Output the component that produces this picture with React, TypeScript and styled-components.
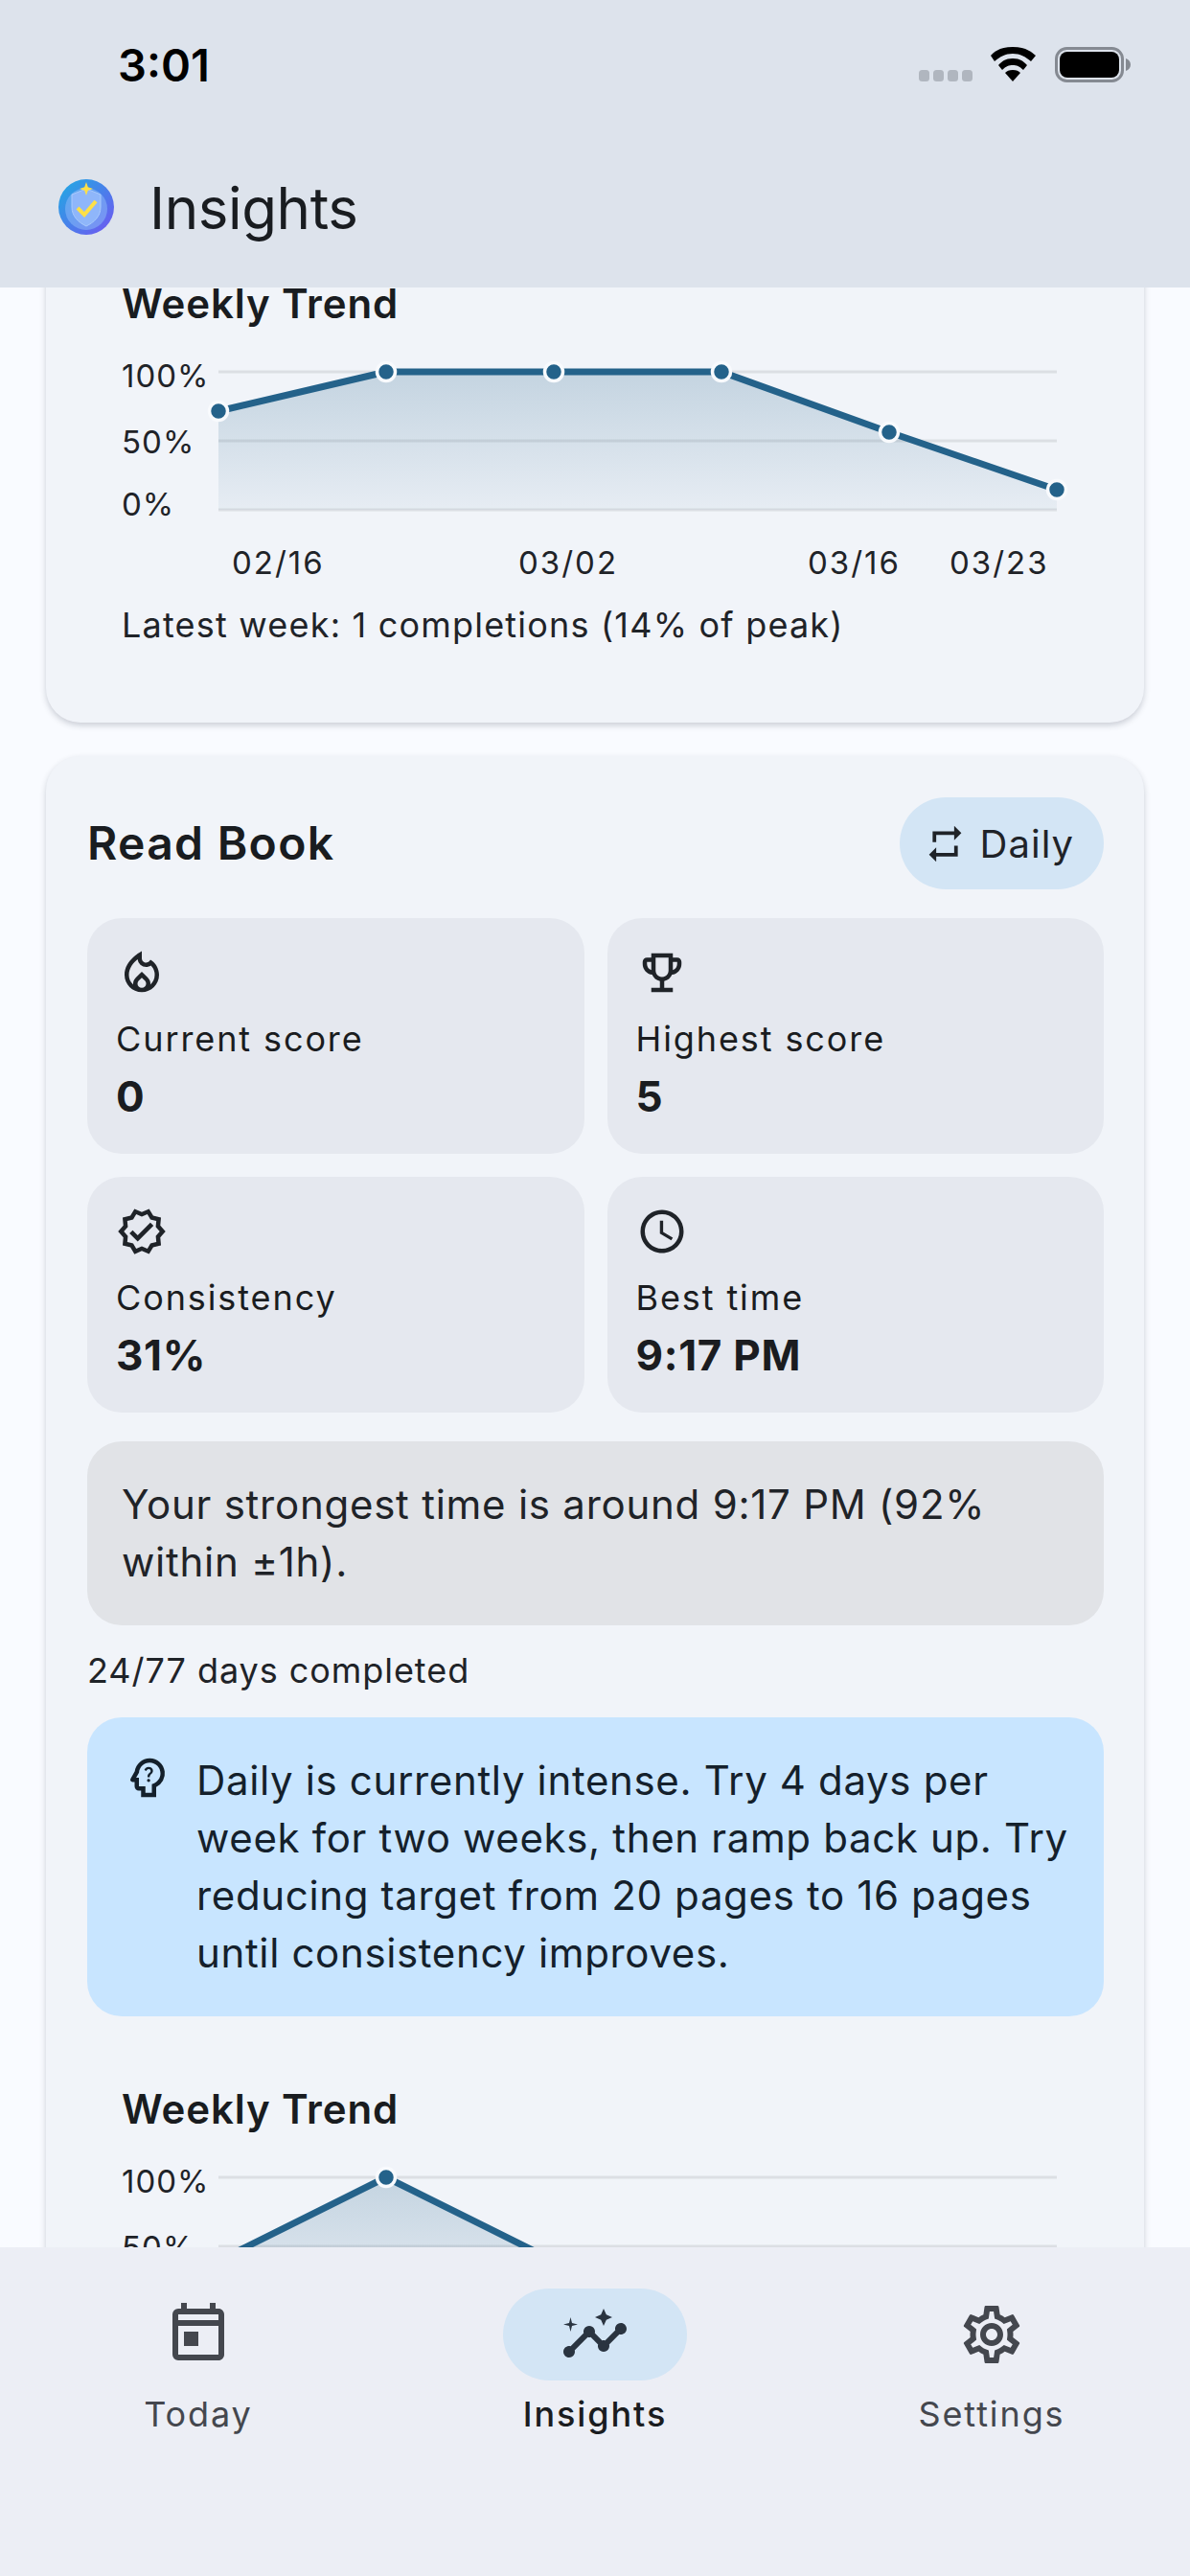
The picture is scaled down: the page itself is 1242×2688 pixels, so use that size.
import React from "react";
import styled, { createGlobalStyle } from "styled-components";
import {
  MdOutlineLocalFireDepartment,
  MdOutlineEmojiEvents,
  MdOutlineVerified,
  MdOutlineSchedule,
  MdRepeat,
  MdOutlinePsychologyAlt,
  MdOutlineToday,
  MdOutlineInsights,
  MdOutlineSettings,
} from "react-icons/md";

const Global = createGlobalStyle`
  html, body { margin: 0; padding: 0; background: #f9fbff; }
  * { box-sizing: border-box; }
  body { font-family: Inter, "Noto Sans", sans-serif; color: #1a1c20; }
`;

const Screen = styled.div`
  width: 1242px;
  height: 2688px;
  display: flex;
  flex-direction: column;
  overflow: hidden;
  background: #f9fbff;
`;

const Header = styled.header`
  flex: 0 0 300px;
  background: #dde3ec;
  display: flex;
  flex-direction: column;
`;

const StatusBar = styled.div`
  height: 135px;
  display: flex;
  justify-content: space-between;
  padding: 44px 62px 0 123px;
`;

const Clock = styled.span`
  font-size: 47px;
  line-height: 48px;
  font-weight: 600;
  color: #000;
`;

const StatusIcons = styled.div`
  display: flex;
  align-items: flex-start;
  padding-top: 5px;
`;

const TitleBar = styled.div`
  flex: 1;
  display: flex;
  align-items: flex-start;
  padding: 52px 0 0 61px;
  gap: 37px;
`;

const Title = styled.h1`
  margin: 0;
  font-size: 60px;
  line-height: 60px;
  font-weight: 400;
  letter-spacing: -0.4px;
  color: #191c20;
`;

const Scroll = styled.main`
  flex: 1;
  min-height: 0;
  overflow: hidden;
`;

const ScrollInner = styled.div`
  margin-top: -105px;
  padding: 0 48px;
  display: flex;
  flex-direction: column;
  gap: 35px;
`;

const Card = styled.section<{ $pad: string }>`
  background: #f1f4f9;
  border-radius: 36px;
  box-shadow: 0 3px 6px rgba(40, 50, 70, 0.22);
  padding: ${(p) => p.$pad};
`;

const Trend = styled.div`
  padding: 0 0 0 36px;
`;

const TrendTitle = styled.h3`
  margin: 0 0 14px;
  font-size: 42px;
  line-height: 60px;
  font-weight: 600;
  letter-spacing: 0.85px;
  color: #191c20;
`;

const TrendSvg = styled.svg`
  display: block;
  width: 1000px;
  height: 267px;
  font-family: Inter, sans-serif;
  font-size: 33px;
  letter-spacing: 1px;
  fill: #1f2328;
`;

const AxisDate = styled.text`
  letter-spacing: 2px;
`;

const TrendNote = styled.p`
  margin: 0;
  font-size: 36px;
  line-height: 48px;
  letter-spacing: 1.2px;
  color: #1f2328;
`;

const CardHead = styled.div`
  display: flex;
  align-items: center;
  justify-content: space-between;
  margin-bottom: 30px;
`;

const CardTitle = styled.h2`
  margin: 0;
  font-size: 48px;
  line-height: 60px;
  font-weight: 600;
  letter-spacing: 1.3px;
  color: #191c20;
`;

const Chip = styled.div`
  height: 96px;
  padding: 0 31px 0 25px;
  border-radius: 48px;
  background: #d3e5f5;
  display: flex;
  align-items: center;
  gap: 14px;
  font-size: 40px;
  letter-spacing: 1px;
  color: #1f2328;
`;

const StatGrid = styled.div`
  display: grid;
  grid-template-columns: 1fr 1fr;
  gap: 24px;
  margin-bottom: 30px;
`;

const Stat = styled.div`
  height: 246px;
  padding: 30px;
  border-radius: 36px;
  background: #e5e8ef;
  display: flex;
  flex-direction: column;
  color: #1f2328;
`;

const StatLabel = styled.span`
  margin-top: 18px;
  font-size: 36px;
  line-height: 48px;
  letter-spacing: 1.9px;
  color: #1a1c20;
`;

const StatValue = styled.span`
  margin-top: 12px;
  font-size: 44px;
  line-height: 48px;
  font-weight: 700;
  letter-spacing: 0.7px;
  color: #1a1c20;
`;

const Remark = styled.div`
  padding: 36px;
  border-radius: 36px;
  background: #e1e3e7;
  font-size: 42px;
  line-height: 60px;
  letter-spacing: 0.75px;
  color: #1f2328;
`;

const Progress = styled.p`
  margin: 23px 0 25px;
  font-size: 36px;
  line-height: 48px;
  letter-spacing: 0.95px;
  color: #1f2328;
`;

const Advice = styled.div`
  padding: 36px;
  border-radius: 36px;
  background: #c8e5ff;
  display: flex;
  gap: 24px;
  font-size: 42px;
  line-height: 60px;
  letter-spacing: 0.65px;
  color: #14202b;
  margin-bottom: 67px;

  svg {
    flex: 0 0 54px;
  }
`;

const Nav = styled.nav`
  flex: 0 0 343px;
  position: relative;
  z-index: 1;
  background: #eceef5;
  display: grid;
  grid-template-columns: repeat(3, 1fr);
  padding-top: 43px;
`;

const NavItem = styled.div`
  display: flex;
  flex-direction: column;
  align-items: center;
  gap: 11px;
`;

const NavPill = styled.div<{ $active?: boolean }>`
  width: 192px;
  height: 96px;
  border-radius: 48px;
  display: flex;
  align-items: center;
  justify-content: center;
  color: ${(p) => (p.$active ? "#2a3440" : "#44474e")};
  background: ${(p) => (p.$active ? "#d3e5f5" : "transparent")};
`;

const NavLabel = styled.span<{ $active?: boolean }>`
  font-size: 36px;
  line-height: 48px;
  letter-spacing: 1.9px;
  font-weight: ${(p) => (p.$active ? 500 : 400)};
  color: ${(p) => (p.$active ? "#1a1c20" : "#44474e")};
`;

const XS = [101, 276, 451, 626, 801, 976];

const Chart: React.FC<{ id: string; ys: number[] }> = ({ id, ys }) => {
  const pts = ys.map((y, i) => `${XS[i]},${y}`).join(" ");
  return (
    <TrendSvg viewBox="0 0 1000 267">
      <defs>
        <linearGradient id={id} x1="0" y1="0" x2="0" y2="1">
          <stop offset="0" stopColor="#24628a" stopOpacity="0.22" />
          <stop offset="1" stopColor="#24628a" stopOpacity="0.05" />
        </linearGradient>
      </defs>
      <text x="0" y="43">100%</text>
      <text x="0" y="112">50%</text>
      <text x="0" y="177">0%</text>
      {[27, 99, 171].map((y) => (
        <line key={y} x1="101" x2="976" y1={y} y2={y} stroke="#dcdfe4" strokeWidth="3" />
      ))}
      <polygon points={`101,171 ${pts} 976,171`} fill={`url(#${id})`} />
      <polyline points={pts} fill="none" stroke="#24628a" strokeWidth="7" strokeLinejoin="round" />
      {ys.map((y, i) => (
        <circle key={i} cx={XS[i]} cy={y} r="9.5" fill="#24628a" stroke="#f8fafd" strokeWidth="3.5" />
      ))}
      <AxisDate x="115" y="238">02/16</AxisDate>
      <AxisDate x="414" y="238">03/02</AxisDate>
      <AxisDate x="716" y="238">03/16</AxisDate>
      <AxisDate x="864" y="238">03/23</AxisDate>
    </TrendSvg>
  );
};

const Logo = () => (
  <svg width="58" height="58" viewBox="0 0 58 58">
    <defs>
      <linearGradient id="logoRing" x1="0.1" y1="0.1" x2="0.9" y2="0.9">
        <stop offset="0" stopColor="#26a4e4" />
        <stop offset="1" stopColor="#6a5df0" />
      </linearGradient>
    </defs>
    <circle cx="29" cy="29" r="29" fill="url(#logoRing)" />
    <circle cx="29" cy="31" r="22" fill="#8ab8f8" opacity="0.55" />
    <path d="M29 10l15 6v13c0 10-7 16-15 20-8-4-15-10-15-20V16z" fill="#8fb6fa" stroke="#a9cafc" strokeWidth="1" />
    <path d="M20 30l7 7 12-14" fill="none" stroke="#fde047" strokeWidth="4" />
    <path d="M29 3l1.800 5.200L36 10l-5.200 1.800L29 17l-1.800-5.200L22 10l5.200-1.800z" fill="#fde047" />
  </svg>
);

const Signal = () => (
  <svg width="221" height="38" viewBox="0 0 221 38">
    <g fill="#b0b6bf">
      <rect x="0" y="24" width="11" height="12" rx="3.5" />
      <rect x="15" y="24" width="11" height="12" rx="3.5" />
      <rect x="30" y="24" width="11" height="12" rx="3.5" />
      <rect x="45" y="24" width="11" height="12" rx="3.5" />
    </g>
    <path d="M98 0 C 83 0 78 6 75 9 L 79 15 C 85 10 90 7 98 7 C 106 7 111 10 117 15 L 122 9 C 118 6 113 0 98 0 Z" fill="#000" />
    <path d="M98 12 C 90 12 87 15 83 19 L 87 24 C 91 20 94 19 98 19 C 102 19 105 20 109 24 L 113 19 C 109 15 106 12 98 12 Z" fill="#000" />
    <path d="M98 24 C 94 24 92 25 90 27 L 98 36 L 106 27 C 104 25 102 24 98 24 Z" fill="#000" />
    <rect x="143.500" y="1.500" width="69" height="34" rx="11" fill="none" stroke="#858a92" strokeWidth="3" />
    <rect x="147" y="5" width="62" height="27" rx="8" fill="#000" />
    <path d="M216 12c3 1 5 3.500 5 6.500s-2 5.500-5 6.500z" fill="#858a92" />
  </svg>
);

const stats = [
  { icon: MdOutlineLocalFireDepartment, label: "Current score", value: "0" },
  { icon: MdOutlineEmojiEvents, label: "Highest score", value: "5" },
  { icon: MdOutlineVerified, label: "Consistency", value: "31%" },
  { icon: MdOutlineSchedule, label: "Best time", value: "9:17 PM" },
];

const tabs = [
  { icon: MdOutlineToday, label: "Today" },
  { icon: MdOutlineInsights, label: "Insights", active: true },
  { icon: MdOutlineSettings, label: "Settings" },
];

export default function App() {
  return (
    <Screen>
      <Global />
      <Header>
        <StatusBar>
          <Clock>3:01</Clock>
          <StatusIcons>
            <Signal />
          </StatusIcons>
        </StatusBar>
        <TitleBar>
          <Logo />
          <Title>Insights</Title>
        </TitleBar>
      </Header>
      <Scroll>
        <ScrollInner>
          <Card $pad="92px 43px 78px">
            <Trend>
              <TrendTitle>Weekly Trend</TrendTitle>
              <Chart id="trendA" ys={[68, 27, 27, 27, 90, 150]} />
              <TrendNote>Latest week: 1 completions (14% of peak)</TrendNote>
            </Trend>
          </Card>
          <Card $pad="43px 42px 0 43px">
            <CardHead>
              <CardTitle>Read Book</CardTitle>
              <Chip>
                <MdRepeat size={45} />
                Daily
              </Chip>
            </CardHead>
            <StatGrid>
              {stats.map((s) => (
                <Stat key={s.label}>
                  <s.icon size={54} />
                  <StatLabel>{s.label}</StatLabel>
                  <StatValue>{s.value}</StatValue>
                </Stat>
              ))}
            </StatGrid>
            <Remark>Your strongest time is around 9:17 PM (92% within ±1h).</Remark>
            <Progress>24/77 days completed</Progress>
            <Advice>
              <MdOutlinePsychologyAlt size={54} />
              <span>
                Daily is currently intense. Try 4 days per week for two weeks, then ramp back up. Try
                reducing target from 20 pages to 16 pages until consistency improves.
              </span>
            </Advice>
            <Trend>
              <TrendTitle>Weekly Trend</TrendTitle>
              <Chart id="trendB" ys={[114, 27, 114, 150, 150, 150]} />
            </Trend>
          </Card>
        </ScrollInner>
      </Scroll>
      <Nav>
        {tabs.map((t) => (
          <NavItem key={t.label}>
            <NavPill $active={t.active}>
              <t.icon size={72} />
            </NavPill>
            <NavLabel $active={t.active}>{t.label}</NavLabel>
          </NavItem>
        ))}
      </Nav>
    </Screen>
  );
}
